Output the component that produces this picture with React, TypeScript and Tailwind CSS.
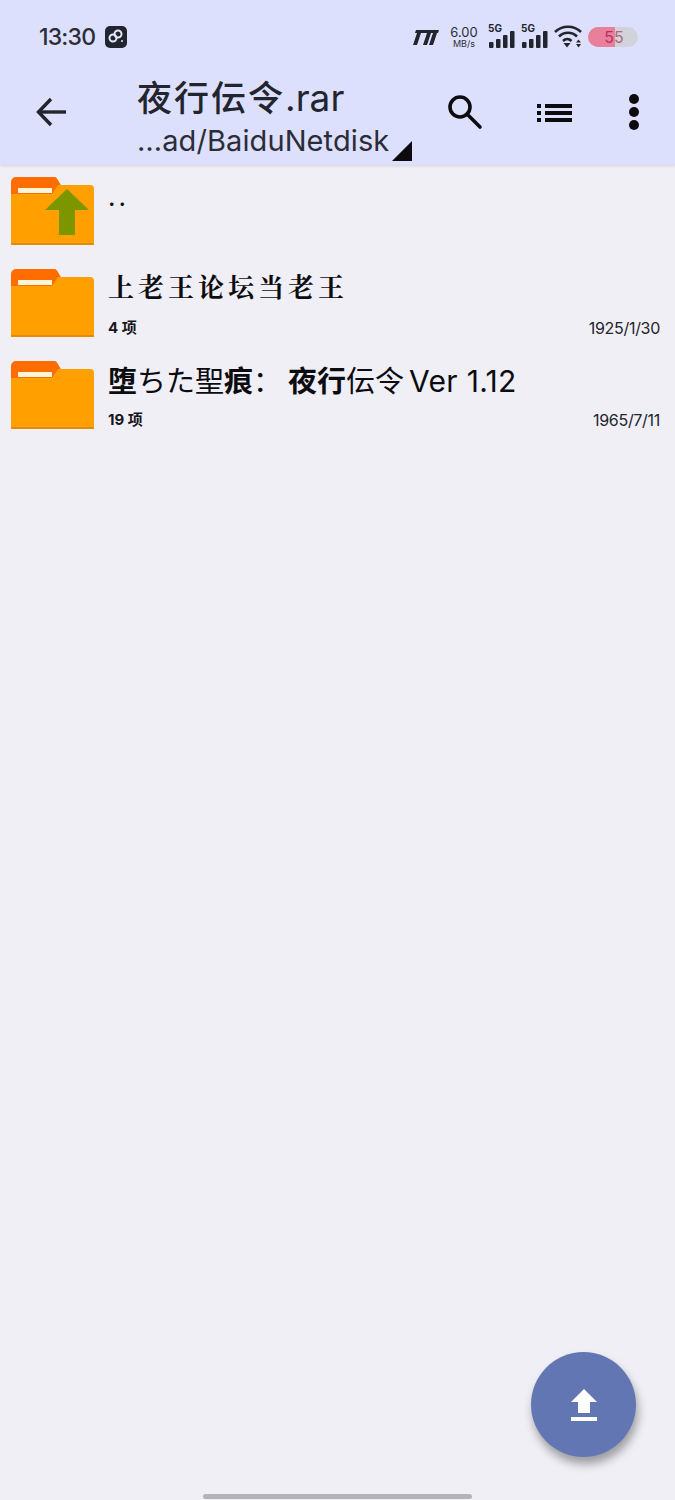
import React from 'react';

const sans = "font-['Inter','Noto_Sans_CJK_SC',sans-serif]";

const Folder: React.FC<{ up?: boolean }> = ({ up }) => (
  <svg width="83" height="68" viewBox="0 0 83 68" className="shrink-0">
    <path d="M0 5a5 5 0 0 1 5-5h38a3 3 0 0 1 3 1.500L51 10V20H0z" fill="#ff6d00" />
    <path d="M0 17H41L47 8H79a4 4 0 0 1 4 4V67H0z" fill="#ffa000" />
    <rect x="7" y="11" width="34" height="5" fill="#fff5d8" />
    <rect x="0" y="66" width="83" height="2" fill="#e58a10" />
    {up && <path d="M56 12 78 33H64V58H48V33H34z" fill="#7c9600" />}
  </svg>
);

const Signal: React.FC = () => (
  <div className="relative w-[27px] h-[24px]">
    <span className="absolute left-0 top-[-3px] text-[10px] leading-[12px] font-bold text-[#22242e]">5G</span>
    <svg width="27" height="24" viewBox="0 0 27 24" className="absolute left-0 top-0">
      <rect x="1" y="17" width="4.500" height="6" rx="1" fill="#22242e" />
      <rect x="8" y="14" width="4.500" height="9" rx="1" fill="#22242e" />
      <rect x="15" y="10" width="4.500" height="13" rx="1" fill="#22242e" />
      <rect x="22" y="6" width="4.500" height="17" rx="1" fill="#22242e" />
    </svg>
  </div>
);

const StatusBar: React.FC = () => (
  <div className="h-[74px] flex items-start justify-between pt-[25px] pl-[39px] pr-[37px]">
    <div className="flex items-center gap-[10px] h-[24px]">
      <span className="text-[23px] leading-[24px] font-medium text-[#2b2d38] tracking-[-0.8px]">13:30</span>
      <div className="w-[22px] h-[22px] rounded-[5px] bg-[#22242e] flex items-center justify-center">
        <svg width="18" height="16" viewBox="0 0 18 16" fill="none" stroke="#e4e6fb" strokeWidth="2">
          <circle cx="6" cy="9" r="3.500" />
          <circle cx="11" cy="5" r="3.500" />
          <circle cx="15" cy="12" r="1" fill="#e4e6fb" stroke="none" />
        </svg>
      </div>
    </div>
    <div className="flex items-center h-[24px]">
      <svg width="27" height="16" viewBox="0 0 27 16" fill="#22242e" className="mr-[11px]">
        <path d="M4 1h23l-1 3h-1l-4 12h-4l4-12h-2l-4 12h-4l4-12H9L5 16H1L5 4H3z" />
      </svg>
      <div className="flex flex-col items-center w-[28px] mr-[10px] text-[#2b2d38]">
        <span className="text-[13px] leading-[14px]">6.00</span>
        <span className="text-[9px] leading-[10px]">MB/s</span>
      </div>
      <div className="mr-[6px]"><Signal /></div>
      <div className="mr-[6px]"><Signal /></div>
      <svg width="29" height="24" viewBox="0 0 29 24" fill="none" stroke="#22242e" strokeWidth="2.600" className="mr-[5px]">
        <path d="M1 7c7-7 19-7 26 0" />
        <path d="M5 11.500c5-5 13-5 18 0" />
        <path d="M9 16c2.500-2.500 6-2.500 8.500 0" />
        <path d="M9.500 18h7l-3.500 4.500z" fill="#22242e" stroke="none" />
        <path d="M22 17.500h5l-2.500-3zM22 19h5l-2.500 3.500z" fill="#22242e" stroke="none" />
      </svg>
      <div className="relative w-[50px] h-[20px] rounded-full bg-[#d2d3da] overflow-hidden flex items-center justify-center">
        <div className="absolute left-0 top-0 bottom-0 w-[27px] bg-[#e8809c]" />
        <span className="relative text-[16px] leading-[20px] pl-[2px]">
          <span className="text-[#b8305f]">5</span>
          <span className="text-[#a86a78]">5</span>
        </span>
      </div>
    </div>
  </div>
);

const Toolbar: React.FC = () => (
  <div className="h-[91px] flex items-start relative">
    <svg width="34" height="30" viewBox="0 0 34 30" fill="none" stroke="#22242e" strokeWidth="3.400" className="ml-[36px] mt-[23px] shrink-0">
      <path d="M30 15H3" />
      <path d="M15 2 2.500 15 15 28" />
    </svg>
    <div className="ml-[67px] w-[278px] -mt-[4px]">
      <div className="text-[35px] leading-[52px] text-[#22242e] font-medium font-['Noto_Sans_CJK_SC','Inter',sans-serif] tracking-[2px] whitespace-nowrap">
        夜行伝令<span className="font-['Inter'] font-normal text-[37px] tracking-normal">.rar</span>
      </div>
      <div className="flex items-end">
        <span className="text-[29px] leading-[33px] text-[#2b2d38] tracking-[0.1px] whitespace-nowrap">…ad/BaiduNetdisk</span>
        <svg width="20" height="20" viewBox="0 0 20 20" className="ml-[3px] mb-[-4px]"><path d="M20 0V20H0z" fill="#0c0c10" /></svg>
      </div>
    </div>
    <svg width="36" height="36" viewBox="0 0 36 36" fill="none" stroke="#0c0c10" strokeWidth="3.600" className="ml-[32px] mt-[20px] shrink-0">
      <circle cx="13" cy="13" r="10" />
      <path d="m20 20 13 13" strokeLinecap="round" />
    </svg>
    <svg width="35" height="20" viewBox="0 0 35 20" fill="#0c0c10" className="ml-[54px] mt-[29px] shrink-0">
      <rect x="0" y="1" width="4" height="4" />
      <rect x="8" y="1" width="27" height="4" />
      <rect x="0" y="8" width="4" height="4" />
      <rect x="8" y="8" width="27" height="4" />
      <rect x="0" y="15" width="4" height="4" />
      <rect x="8" y="15" width="27" height="4" />
    </svg>
    <svg width="12" height="38" viewBox="0 0 12 38" fill="#0c0c10" className="ml-[56px] mt-[19px] shrink-0">
      <circle cx="6" cy="6" r="5" />
      <circle cx="6" cy="19" r="5" />
      <circle cx="6" cy="32" r="5" />
    </svg>
  </div>
);

const Row: React.FC<{ title: React.ReactNode; count?: string; date?: string; up?: boolean }> = ({ title, count, date, up }) => (
  <div className="h-[92px] flex pl-[11px] pr-[15px]">
    <Folder up={up} />
    <div className="flex-1 ml-[14px] h-[68px] flex flex-col justify-between">
      <div className="text-[26px] leading-[36px] text-[#0c0c10] whitespace-nowrap">{title}</div>
      {count && (
        <div className="flex justify-between items-end -mb-[1px]">
          <span className="text-[15px] leading-[20px] font-bold text-[#16171d]">{count}</span>
          <span className="text-[16px] leading-[20px] text-[#22242e] tracking-[-0.3px]">{date}</span>
        </div>
      )}
    </div>
  </div>
);

export default function App() {
  return (
    <div className={`relative w-[675px] h-[1500px] bg-[#f0eff5] overflow-hidden ${sans}`}>
      <header className="bg-[#dde0fc] h-[165px] shadow-[0_1px_3px_rgba(0,0,0,0.12)]">
        <StatusBar />
        <Toolbar />
      </header>
      <main className="pt-[12px]">
        <Row up title={<span className="relative top-[2px] tracking-[3px]">..</span>} />
        <Row
          title={<span className="relative -top-[1px] font-bold font-['Noto_Serif_CJK_SC','Noto_Sans_CJK_SC',serif] tracking-[4px]">上老王论坛当老王</span>}
          count="4 项"
          date="1925/1/30"
        />
        <Row
          title={
            <span className="font-['Noto_Sans_CJK_SC','Inter',sans-serif] text-[29px]">
              <span className="font-bold">堕</span>ちた聖<span className="font-bold">痕</span>：<span className="font-bold ml-[6px]">夜行</span>伝令<span className="font-['Inter'] text-[30px] ml-[5px] tracking-[0.3px]">Ver 1.12</span>
            </span>
          }
          count="19 项"
          date="1965/7/11"
        />
      </main>
      <button className="absolute left-[531px] top-[1352px] w-[105px] h-[105px] rounded-full bg-[#6276b4] shadow-[2px_7px_10px_rgba(0,0,0,0.35)] flex items-center justify-center">
        <svg width="28" height="32" viewBox="0 0 28 32" fill="#ffffff">
          <path d="M14 0 27 13H20V24H8V13H1z" />
          <rect x="1" y="28" width="26" height="4" />
        </svg>
      </button>
      <div className="absolute left-[203px] top-[1494px] w-[269px] h-[5px] rounded-full bg-[#b4b4b8]" />
    </div>
  );
}
